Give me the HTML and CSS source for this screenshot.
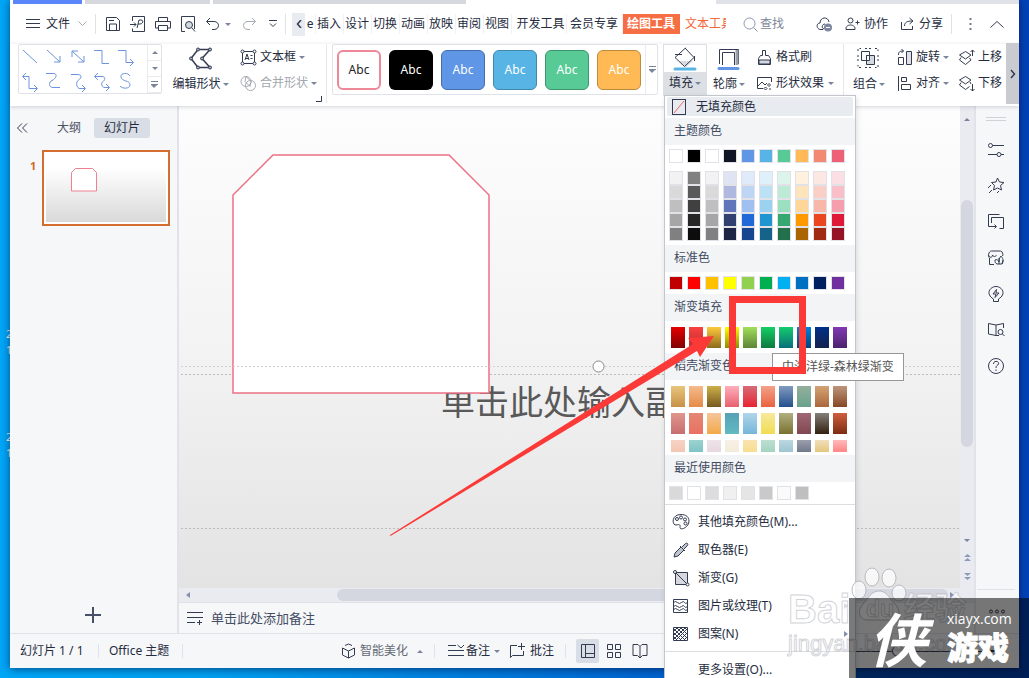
FILE: index.html
```html
<!DOCTYPE html>
<html lang="zh-CN">
<head>
<meta charset="utf-8">
<title>演示文稿</title>
<link rel="stylesheet" href="styles.css">
</head>
<body>
<span class="desk-label desk-label-a">2<br>1</span>
<span class="desk-label desk-label-b">2<br>1</span>
<div class="window">
  <div class="doc-tabs"><i class="doc-tab active"></i><i class="doc-tab short"></i><i class="doc-tab long"></i><i class="doc-rest"></i></div>

  <header class="menubar">
    <button class="file-btn"><svg class="ico" width="14" height="10"><path d="M0 .5h14M0 4.5h14M0 8.5h14"/></svg>文件<svg class="ico faint" width="9" height="6"><path d="M.5 .5l4 4 4-4"/></svg></button>
    <i class="vsep"></i>
    <div class="quick">
      <button aria-label="保存"><svg class="ico" width="16" height="16"><path d="M1.5 1.5h10l3 3v10h-13zM4.500 14v-6h7v6M4 4.500h5"/></svg></button>
      <button aria-label="输出为PDF"><svg class="ico" width="16" height="16"><path d="M2.500 5V.5h12v15h-12v-3M0 8.500h6M4 6.500l2 2-2 2M7 12l2-8h2c3 0 2 4-1 4H8"/></svg></button>
      <button aria-label="打印"><svg class="ico" width="16" height="16"><path d="M3.500 5V1.500h9V5M3.500 12h-3V5.500h15V12h-3M3.500 9.500h9v5h-9z"/></svg></button>
      <button aria-label="打印预览"><svg class="ico" width="16" height="16"><path d="M5 15.500H1.500V.5h13V13M12 12l3 3.500"/><circle cx="9" cy="9" r="3.500" fill="#d4d8df"/></svg></button>
      <button aria-label="撤销"><svg class="ico" width="15" height="16"><path d="M5 2L1.500 5.500 5 9M2 5.500h7c6 0 6 8 0 8H7"/></svg></button>
      <i class="tri"></i>
      <button aria-label="恢复" class="redo"><svg class="ico faint" width="15" height="16"><path d="M10 2l3.500 3.500L10 9M13 5.500H6c-6 0-6 8 0 8h2"/></svg></button>
      <button aria-label="自定义"><svg class="ico" width="8" height="8"><path d="M0 .5h8M1 3.500l3 3 3-3"/></svg></button>
    </div>
    <i class="vsep"></i>
    <button class="tab-left" aria-label="向左"><svg class="ico" width="6" height="8"><path d="M5 0L1.500 4 5 8" stroke-width="1.500"/></svg></button>
    <nav class="tabs">
      <button class="cut">e</button><button>插入</button><button>设计</button><button>切换</button><button>动画</button><button>放映</button><button>审阅</button><button>视图</button><button class="wide">开发工具</button><button class="wide2">会员专享</button><button class="current">绘图工具</button><button class="orange">文本工具</button>
    </nav>
    <label class="search"><svg class="ico" width="15" height="15"><circle cx="6.500" cy="6.500" r="5.500"/><path d="M10.500 10.500l4 4"/></svg><input type="text" placeholder="查找" aria-label="查找"></label>
    <div class="account">
      <button aria-label="云同步"><svg class="ico" width="17" height="15"><path d="M7 12.500H5C0 12.500 0 6 4 6 4 0 12-1 13 5M8 12c-3-1-2-5 1-5"/><circle cx="12" cy="10.500" r="4" fill="#7d87a0" stroke="none"/><path d="M10 10.500h4" stroke="#fff"/></svg></button>
      <button class="collab"><svg class="ico" width="15" height="14"><circle cx="5.500" cy="3.500" r="2.500"/><path d="M1 12.500c-1-6 10-6 9 0zM10.500 5.500h4M12.500 3.500v4"/></svg>协作</button>
      <button class="share"><svg class="ico" width="15" height="14"><path d="M1.500 5v7.500h11V9M4.500 9c0-4 3-5 8-5M9.500 1l3.500 3-3.500 3"/></svg>分享</button>
    </div>
    <i class="vsep"></i>
    <button class="dots" aria-label="更多"><svg width="3" height="13" fill="#737a8b"><path d="M.5 0h2v2h-2zM.5 5h2v2h-2zM.5 10h2v2h-2z"/></svg></button>
    <button class="fold" aria-label="折叠功能区"><svg class="ico" width="14" height="8"><path d="M.5 7.500l6.500-6 6.500 6"/></svg></button>
  </header>

  <section class="ribbon">
    <div class="line-gallery">
      <svg class="ico blue" width="125" height="48"><path d="M4 5l14 13M28 5l13 12M41 11v6h-6M53 6l12 11M53 12V6h6M65 11v6h-6M75 5.500h8v13h7M99 5.500h8v12h7M111 14l3.500 3.500-3.500 3.500M4 31.500h6v12h8M7 28l-3.500 3.500L7 35M15 40l3.500 3.500L15 47M27 28.500h7c6 0 2 6-1 7s-4 7 1 7h7M52 29.500h6c7 0 3 5 1 6s-2 8 2 8h5M63 40l3.500 3.500L63 47M76 31.500h7c4 0 3 4 1 5s-2 6 2 6h4M79 28l-3.500 3.500L79 35M87 39l3.500 3.500L87 46M111 31c-2-4-10-3-9 1 1 5 9 3 9 8 0 4-8 4-10 1"/></svg>
      <div class="stepper"><button aria-label="上一行"><i class="tri up"></i></button><button aria-label="下一行"><i class="tri"></i></button><button aria-label="展开"><i class="tri bar"></i></button></div>
    </div>
    <button class="big edit"><svg class="ico" width="26" height="24"><path d="M10 2.500h12l-8 9 8 9H10L3 11.500z" stroke-width="1.500"/><g fill="#aab0bd"><circle cx="10" cy="2.500" r="1.500"/><circle cx="22" cy="2.500" r="1.500"/><circle cx="14" cy="11.500" r="1.500"/><circle cx="22" cy="20.500" r="1.500"/><circle cx="10" cy="20.500" r="1.500"/><circle cx="3" cy="11.500" r="1.500"/></g></svg><span>编辑形状<i class="tri"></i></span></button>
    <div class="pair textpair">
      <button><svg class="ico" width="17" height="17"><path d="M2.500 2.500h12v12h-12zM5 11l2-6 2 6M5.500 9.500h3M10.500 6.500h2M10.500 9.500h2"/><g fill="#fff"><circle cx="2.500" cy="2.500" r="1.500"/><circle cx="14.500" cy="2.500" r="1.500"/><circle cx="2.500" cy="14.500" r="1.500"/><circle cx="14.500" cy="14.500" r="1.500"/></g></svg>文本框<i class="tri"></i></button>
      <button class="off"><svg class="ico faint" width="17" height="17"><circle cx="6" cy="6.500" r="5"/><circle cx="10.500" cy="10.500" r="5"/><path d="M6 1.500l5 5-1 5-5-5z"/></svg>合并形状<i class="tri"></i></button>
      <svg class="ico launcher" width="6" height="6"><path d="M5.500 0v5.500H0"/></svg>
    </div>
    <i class="rsep"></i>
    <div class="style-gallery">
      <button class="chip c1">Abc</button><button class="chip c2">Abc</button><button class="chip c3">Abc</button><button class="chip c4">Abc</button><button class="chip c5">Abc</button><button class="chip c6">Abc</button>
      <button class="more" aria-label="更多样式"><i class="tri bar"></i></button>
    </div>
    <div class="fill-wrap">
      <button class="fill-btn"><span class="fill-ico"><svg class="ico" width="24" height="24"><path d="M6 14h14l-7 6z" fill="#d9dade" stroke="none"/><path d="M12.500 1L2 10.500l9.500 9 9.500-9-9-9.500M2 7.500h7M21.500 9v5"/><path d="M2 22h20" stroke="#58b4e4" stroke-width="3" stroke-linecap="round"/></svg></span><span>填充<i class="tri"></i></span></button>
      <div class="fill-menu" id="fill-menu">
        <button class="no-fill"><svg class="ico" width="14" height="16"><rect x=".5" y=".5" width="13" height="15" fill="#e9ebef"/><path d="M2 14L12 2" stroke="#e66a6a"/></svg>无填充颜色</button>
        <h3>主题颜色</h3>
        <div class="swatches" data-set="theme"></div>
        <div class="swatches tints" data-set="tints"></div>
        <h3>标准色</h3>
        <div class="swatches" data-set="standard"></div>
        <h3>渐变填充</h3>
        <div class="swatches grad one" data-set="gradient"></div>
        <h3>稻壳渐变色</h3>
        <div class="swatches grad many" data-set="docer"></div>
        <h3>最近使用颜色</h3>
        <div class="swatches recent" data-set="recent"></div>
        <hr>
        <button class="item"><svg class="ico" width="18" height="18"><path d="M9 1.500C-1 1.500 0 12.500 4 12c4-1 4.500 0 4 2.500 0 3.500 9 0 9-6.500 0-4-3-6.500-8-6.500z"/><circle cx="5" cy="6" r="1.500"/><circle cx="9" cy="4.500" r="1.500"/><circle cx="13" cy="6.500" r="1.500"/><circle cx="13.500" cy="10.500" r="1.500"/></svg>其他填充颜色(M)...</button>
        <button class="item"><svg class="ico" width="18" height="18"><path d="M2 16l1-4 6-6 3 3-6 6zM8 5l5 5M10 6l3-3c2-2 4 0 2 2l-3 3" fill="#bfc3cc"/></svg>取色器(E)</button>
        <button class="item"><svg class="ico" width="18" height="18"><path d="M3.500 3.500h12v12h-12z" fill="#d6d8dd"/><path d="M3 3l13 13"/><circle cx="3" cy="3" r="1.500" fill="#fff"/><circle cx="15.500" cy="15.500" r="1.500" fill="#fff"/></svg>渐变(G)</button>
        <button class="item"><svg class="ico" width="18" height="18"><path d="M1.500 2.500h14v13h-14zM1.500 5.500q2-2 4 0t4 0 3 0 3 0M1.500 9.500q2-2 4 0t4 0 3 0 3 0M1.500 12.500q2-2 4 0t4 0 3 0 3 0"/></svg>图片或纹理(T)<i class="tri right"></i></button>
        <button class="item"><svg class="ico" width="18" height="18"><path d="M1.500 2.500h14v13h-14zM2 6l4-4M2 10l8-8M2 14l12-12M4 15L15 4M8 15l7-7M12 15l3-3M2 12l3 3M2 8l7 7M2 4l11 11M4 2l11 11M8 2l7 7M12 2l3 3"/></svg>图案(N)<i class="tri right"></i></button>
        <hr>
        <button class="item last">更多设置(O)...</button>
      </div>
    </div>
    <button class="big outline"><svg class="ico" width="24" height="24"><path d="M2.500 17V2.500h19V17" /><path d="M20 3v15" stroke="#9ba0ab" stroke-width="3"/><path d="M5.500 18V5.500h12V18"/><path d="M2 21.500h19" stroke="#6295e6" stroke-width="3" stroke-linecap="round"/></svg><span>轮廓<i class="tri"></i></span></button>
    <div class="pair fxpair">
      <button><svg class="ico" width="15" height="17"><path d="M5.500 6.500v-5h3v5h3l2 3v6h-12v-6l2-3z"/><path d="M2 11h11v4H2z" fill="#d5d8de"/></svg>格式刷</button>
      <button><svg class="ico" width="15" height="15"><path d="M6 12.500H.5v-11h14V6M1 10l4-4 3 3 2-2M12 7.500l1.500 1.500-1.500 1.500-1.500-1.500zM8.500 11l1.500 1.500-1.500 1.500L7 12.500zM13 12v2"/></svg>形状效果<i class="tri"></i></button>
    </div>
    <i class="rsep"></i>
    <button class="big group"><svg class="ico" width="22" height="22"><path d="M4.500 4.500h8v9h-8z" /><path d="M9.500 8.500h8v9h-8z" fill="#d5d8de"/><path d="M9.500 8.500h3v5h-3z" fill="#fff"/><path d="M1 4V1.500h3M8 1.500h6M18 1.500h3V4M21 8v6M21 18v2.500h-3M14 20.500H8M4 20.500H1V18M1 14V8" stroke-dasharray="2 2"/></svg><span>组合<i class="tri"></i></span></button>
    <div class="pair arrange">
      <button><svg class="ico" width="16" height="17"><path d="M9.500 2.500h5v13h-5z" fill="#dfe1e6"/><path d="M1.500 8.500h5v7h-5zM1.500 6c0-3 1-4 5-4M4.500 0l2 2-2 2"/></svg>旋转<i class="tri"></i></button>
      <button><svg class="ico" width="16" height="17"><path d="M1.500 1v15M4.500 2.500h5v4h-5zM4.500 9.500h9v5h-9z"/></svg>对齐<i class="tri"></i></button>
    </div>
    <div class="pair order">
      <button><svg class="ico" width="18" height="17"><path d="M1.500 6l6-3.500 5.500 3.500-5.500 4zM3 8.500l-1.500 2.500 6 4.500 5.500-4.500-1.500-2"/><path d="M14.500 7V1M12.500 3l2-2 2 2"/></svg>上移</button>
      <button><svg class="ico" width="18" height="17"><path d="M1.500 5l6-3.500 5.500 3.500-5.500 4zM3 7.500l-1.500 2.500 6 4.500 4-3M12 7l1 2"/><path d="M14.500 9v7M12.500 14l2 2 2-2"/></svg>下移</button>
    </div>
    <button class="ribbon-next" aria-label="向右"><svg class="ico" width="6" height="10"><path d="M1 1l3.500 4L1 9" stroke-width="1.500"/></svg></button>
  </section>

  <main class="work">
    <aside class="slides">
      <div class="pane-tabs"><button class="collapse" aria-label="收起"><svg class="ico" width="11" height="10"><path d="M5 .5L.5 5 5 9.500M10 .5L5.500 5l4.500 4.500"/></svg></button><button>大纲</button><button class="on">幻灯片</button></div>
      <div class="slide-row"><span class="num">1</span><button class="thumb" aria-label="幻灯片 1"><svg width="120" height="68"><path d="M25.500 37V18.500l4-4h17l4 4V37z" fill="#fff" stroke="#ee8090"/></svg></button></div>
      <button class="add" aria-label="新建幻灯片"><svg class="ico" width="16" height="16"><path d="M8 0v16M0 8h16" stroke-width="2"/></svg></button>
    </aside>
    <section class="editor">
      <div class="stage">
        <p class="placeholder">单击此处输入副</p>
        <svg class="drawing" width="100%" height="100%">
          <path d="M54 287V89l40-40h176l40 40v198z" fill="#fff" stroke="#ec7185" stroke-width="1.500"/>
          <g stroke="#bcbcbc" stroke-dasharray="2 2"><path d="M2 260.500h1500" stroke="#d0d0d0"/><path d="M2 268.500h52M311 268.500h1500M2 422.500h1500"/></g>
          <circle cx="419.500" cy="260.500" r="5.500" fill="#fff" stroke="#888"/>
        </svg>
      </div>
      <div class="vscroll"><i class="tri up"></i><i class="vthumb"></i><i class="tri"></i><svg width="7" height="30" fill="#8e9ab9"><path d="M3.500 3L7 6H0zM3.500 7L7 10H0zM0 22h7l-3.500 3zM0 26h7l-3.500 3z"/></svg></div>
      <div class="hscroll"><i class="tri left"></i><i class="hthumb"></i><i class="tri right"></i></div>
      <div class="notes"><svg class="ico" width="17" height="15"><path d="M0 1.500h16M0 6.500h16M0 11.500h8M10 11.500h5M12.500 9v5"/></svg>单击此处添加备注</div>
    </section>
    <aside class="tools">
      <i class="grip"></i>
      <button aria-label="属性"><svg class="ico" width="18" height="18"><circle cx="3.500" cy="4.500" r="2"/><path d="M5.500 4.500H17M1 13.500h9M14 13.500h3"/><circle cx="12" cy="13.500" r="2"/></svg></button>
      <button aria-label="动画"><svg class="ico" width="18" height="18"><path d="M10.500 1l2 4 4.500.500-3.500 3 1 4.500-4-2-4 2 1-4.500-3-3 4.500-.500zM4 8l-3 3M5 13l-3 3M12 14l-2 2"/></svg></button>
      <button aria-label="切换"><svg class="ico" width="18" height="18"><path d="M6 13.500H1.500v-12h11M4.500 10V4.500h12v11h-4M6 13.500h3M7.500 11.500l2 2-2 2"/></svg></button>
      <button aria-label="素材"><svg class="ico" width="18" height="18"><path d="M7 15.500H2.500V9c-2-1-1-7 2-7h9c2 0 3 4 2 5M1.500 6c1 3 4 3 4 0 1 2 3 2 4 0M8 11c2-1 3 0 4 2 0-3 1-5 2-6 2 2 3 5 1 8h-5c-2-1-2-2-2-4zM12 15V9M15 15l1-4"/></svg></button>
      <button aria-label="灵感"><svg class="ico" width="18" height="18"><path d="M6.500 14C-2 9 3 1.500 9 1.500S20 9 11.500 14v2.500h-5zM9.500 4.500L6 9h3l-1 3.500L12 8H9z"/></svg></button>
      <button aria-label="查阅"><svg class="ico" width="18" height="18"><path d="M9 14.500L1.500 13V2.500L9 4l7.500-1.500V7M9 4v10.500h3"/><circle cx="13.500" cy="11" r="2.500"/><path d="M15.500 13l2 2"/></svg></button>
      <button aria-label="帮助"><svg class="ico" width="18" height="18"><circle cx="9" cy="9" r="7.500"/><path d="M6.500 7c0-4 6-3 5 0-1 2-2.500 1-2.500 4M9 12.500V14"/></svg></button>
      <i class="tool-rule"></i>
      <button class="tool-more" aria-label="更多工具"><svg class="ico" width="17" height="5"><circle cx="3" cy="2.500" r="1.500"/><circle cx="9" cy="2.500" r="1.500"/><circle cx="15" cy="2.500" r="1.500"/></svg></button>
    </aside>
  </main>

  <footer class="status">
    <div class="status-left"><span class="page">幻灯片 1 / 1</span><i class="vsep"></i><span class="office">Office 主题</span><i class="vsep"></i></div>
    <button class="beauty"><svg class="ico" width="15" height="16"><path d="M4 2.500L7.500 1 11 2.500M1.500 5v7l6 3 6-3V5l-6 3zM7.500 8v7"/></svg>智能美化<i class="tri up"></i></button>
    <i class="vsep"></i>
    <button class="note-btn"><svg class="ico" width="17" height="14"><path d="M0 1.500h8M0 6.500h16M0 11.500h16M9.500 1l3.500 3 3-3"/></svg>备注<i class="tri"></i></button>
    <button class="comment"><svg class="ico" width="17" height="16"><path d="M8 2.500H1.500v12l2-2h11V8M12.500 0v7M9 3.500h7"/></svg>批注</button>
    <i class="vsep"></i>
    <div class="views">
      <button class="on" aria-label="普通视图"><svg class="ico" width="16" height="16"><path d="M1.500 1.500h13v13h-13zM5.500 1.500v13M5.500 10.500h9"/></svg></button>
      <button aria-label="浏览视图"><svg class="ico" width="16" height="16"><path d="M1.500 1.500h5v5h-5zM9.500 1.500h5v5h-5zM1.500 9.500h5v5h-5zM9.500 9.500h5v5h-5z"/></svg></button>
      <button aria-label="阅读视图"><svg class="ico" width="16" height="16"><path d="M8 3.500L6 1.500H1v11h4.500L8 15l2.500-2.500H15v-11h-5zM8 3.500V14"/></svg></button>
    </div>
    <label class="zoom"><input type="range" min="10" max="200" value="92" aria-label="缩放"></label>
    <button class="zoom-in" aria-label="放大"><svg class="ico" width="12" height="12"><path d="M6 0v12M0 6h12" stroke-width="2"/></svg></button>
  </footer>
</div>

<div class="tooltip" role="tooltip">中海洋绿-森林绿渐变</div>
<svg class="marks" width="1029" height="678"><path d="M390 535L693 344 688 338 714 336 700 357 697 351 390.500 536z" fill="#fb3937"/><path d="M732.500 299.500h70v71h-70z" fill="none" stroke="#fb3937" stroke-width="7"/></svg>
<div class="baidu">
  <svg class="paw" width="56" height="54" fill="#fff" stroke="#b9bac0" fill-opacity=".7"><ellipse cx="8" cy="23" rx="7" ry="9"/><ellipse cx="21" cy="10" rx="7" ry="9"/><ellipse cx="38" cy="11" rx="7" ry="9"/><ellipse cx="48" cy="26" rx="7" ry="8"/><path d="M28 24c-8 0-10 7-16 13-7 8-3 16 4 16h24c8 0 11-8 4-16-6-6-8-13-16-13z"/></svg>
  <div class="baidu-name"><b>Bai</b><em>du</em><strong>经验</strong></div><span>jingyan.baidu.com</span>
</div>
<div class="site-mark"><span class="xia">侠</span><div class="site-name"><small>xiayx.com</small><b>游戏</b></div></div>
<script src="script.js"></script>
</body>
</html>
```
FILE: styles.css
```css
* { box-sizing: border-box; }
html, body { height: 100%; }
body {
  margin: 0; padding: 0 10px 10px; overflow: hidden; position: relative;
  font: 12px/16px "Noto Sans", "Noto Sans CJK SC", sans-serif; color: #252c40;
  background: linear-gradient(90deg, #00a6f7 0, #00a0f0 20%, #0062cd 65%, #0242b8 100%);
}
button, input { font: inherit; color: inherit; border: 0; background: none; padding: 0; margin: 0; }
button { display: flex; align-items: center; white-space: nowrap; flex: none; }
svg { flex: none; display: block; }
i { display: block; flex: none; }
.ico { fill: none; stroke: #333b50; stroke-width: 1; }
.ico.faint { stroke: #a5a9b1; }
.ico.blue { stroke: #6c93dd; }
.tri { width: 0; height: 0; border: 3px solid transparent; border-top-color: #7a849d; border-bottom: 0; }
.tri.up { border-bottom: 3px solid #7a849d; border-top: 0; }
.tri.left { border: 3px solid transparent; border-right: 4px solid #8490ac; border-left: 0; }
.tri.right { border: 3px solid transparent; border-left: 4px solid #8490ac; border-right: 0; }
.tri.bar { width: 7px; height: 8px; border: 0; background: linear-gradient(#7a849d, #7a849d) 0 0 / 7px 1px no-repeat, linear-gradient(#7a849d, #7a849d) 0 3px / 7px 1px no-repeat; position: relative; }
.tri.bar::after { content: ""; position: absolute; left: 0; top: 4px; border: 3px solid transparent; border-top-color: #7a849d; border-bottom: 0; }
.vsep { width: 1px; height: 20px; background: #e0e2e8; }
.desk-label { position: absolute; left: 6px; color: #fff; font-size: 11px; }
.desk-label-a { top: 326px; }
.desk-label-b { top: 429px; }

.window { position: relative; height: 100%; display: flex; flex-direction: column; background: #fff; box-shadow: 0 1px 8px rgba(0, 10, 50, .6); }

.doc-tabs { height: 4px; display: flex; gap: 3px; padding-left: 3px; flex: none; }
.doc-tab { background: #d6d8de; }
.doc-tab.active { width: 69px; background: #5b86fb; }
.doc-tab.short { width: 125px; }
.doc-tab.long { width: 253px; margin-right: 247px; }
.doc-rest { flex: 1; background: #e0e2e7; }

.menubar { height: 40px; display: flex; align-items: center; padding-left: 16px; flex: none; }
.file-btn { gap: 6px; margin-right: 8px; }
.file-btn svg:last-child { margin-left: 2px; }
.quick { display: flex; align-items: center; gap: 9px; width: 189px; padding-left: 9px; }
.quick .tri { margin-left: -4px; }
.quick .redo { margin: 0 3px 0 2px; }
.tab-left { width: 13px; height: 23px; margin-left: 6px; background: #e8ebf0; justify-content: center; }
.tabs { display: flex; align-items: center; width: 421px; overflow: hidden; flex: none; }
.tabs button { width: 28px; justify-content: center; height: 20px; box-shadow: inset 1px 0 #f0f1f4; }
.tabs .cut { width: 10px; box-shadow: none; }
.tabs .wide { width: 55px; padding-left: 4px; }
.tabs .wide2 { width: 56px; }
.tabs .current { width: 58px; background: #f66e43; color: #fff; font-weight: 700; }
.tabs .orange { width: 47px; padding-left: 5px; justify-content: flex-start; color: #f0683c; overflow: hidden; box-shadow: none; }
.search { display: flex; align-items: center; gap: 2px; margin-left: 17px; color: #8790a2; }
.search .ico { stroke: #8a94aa; }
.search input { width: 46px; outline: 0; }
.search input::placeholder { color: #7d8698; opacity: 1; }
.account { display: flex; gap: 12px; margin-left: 10px; margin-right: 8px; }
.account button { gap: 4px; }
.dots { margin-left: 17px; }
.fold { margin-left: 18px; }

.ribbon { height: 62px; flex: none; display: flex; align-items: flex-start; padding-left: 8px; position: relative; z-index: 2; box-shadow: 0 1px 4px rgba(60, 70, 90, .22); background: #fff; }
.line-gallery { width: 144px; height: 50px; display: flex; border: 1px solid #e0e2e7; border-radius: 2px; flex: none; }
.line-gallery > svg { width: 128px; }
.stepper { width: 14px; border-left: 1px solid #e9ebef; display: flex; flex-direction: column; }
.stepper button { height: 16px; justify-content: center; border-bottom: 1px solid #e9ebef; }
.big { flex-direction: column; gap: 5px; padding-top: 3px; }
.big span { display: flex; align-items: center; gap: 2px; }
.edit { margin-left: 10px; width: 57px; }
.outline { margin-left: 6px; }
.outline svg, .group svg { align-self: flex-start; margin-left: 4px; }
.group { gap: 7px; }
.pair { display: flex; flex-direction: column; gap: 2px; padding-top: 1px; flex: none; }
.pair button { height: 24px; gap: 3px; }
.textpair { width: 82px; margin-left: 11px; position: relative; }
.textpair .off { color: #a3a7ae; }
.launcher { position: absolute; right: 0; top: 52px; }
.rsep { width: 1px; height: 59px; background: #e6e8ec; margin-left: 4px; }
.style-gallery { display: flex; gap: 8px; width: 326px; height: 51px; border: 1px solid #e0e2e7; border-radius: 2px; padding: 5px 0 0 4px; margin-left: 5px; flex: none; }
.chip { width: 44px; height: 40px; border-radius: 6px; border: 1px solid #0003; color: #fff; justify-content: center; }
.c1 { border: 2px solid #ee8798; color: #222; }
.c2 { background: #000; }
.c3 { background: #6096e6; border-color: #456fab; }
.c4 { background: #58b4e4; border-color: #4188ad; }
.c5 { background: #57ca95; border-color: #3f956d; }
.c6 { background: #ffba55; border-color: #c08a3d; }
.more { height: 49px; margin: -5px 0 0 -4px; width: 13px; justify-content: center; border-left: 1px solid #e9ebef; }

.fill-wrap { position: relative; margin-left: 5px; flex: none; }
.fill-btn { width: 44px; height: 52px; flex-direction: column; background: #dce0e5; border: 1px solid #dce0e5; gap: 3px; }
.fill-btn > span { display: flex; align-items: center; gap: 2px; }
.fill-btn .fill-ico { width: 42px; height: 27px; background: #fff; justify-content: center; }
.fill-menu { position: absolute; top: 51px; left: 1px; width: 192px; padding: 1px 0; background: #fff; border: 1px solid #c3c6cc; box-shadow: 1px 2px 5px rgba(40, 50, 70, .15); }
.no-fill { width: 186px; height: 19px; margin: 0 0 2px 2px; padding-left: 5px; gap: 10px; background: #e8ebf0; border-radius: 2px; }
.fill-menu h3 { margin: 0; height: 27px; padding: 5px 0 0 9px; font: inherit; line-height: 16px; color: #414b62; background: #f3f4f6; }
.swatches { display: grid; grid-template-columns: repeat(10, 14px); gap: 4px; padding: 4px 0 4px 4px; }
.swatches button { height: 14px; width: 14px; border: 1px solid #e0e2e7; display: block; }
.tints { row-gap: 0; }
.grad { padding: 6px 0 5px 6px; row-gap: 6px; }
.grad button { height: 21px; border: 0; }
.many { height: 75px; padding-bottom: 0; overflow: hidden; clip-path: inset(0 0 3px 0); }
.fill-menu hr { border: 0; border-top: 1px solid #dcdee2; margin: 0 0 3px; }
.item { width: 100%; height: 28px; padding-left: 7px; gap: 8px; }
.item .right { margin-left: auto; margin-right: 7px; }
.item.last { padding-left: 33px; }
.fill-menu .item + hr { margin: 3px 0 4px; }

.fxpair { margin-left: 12px; width: 77px; }
.fxpair button { gap: 4px; }
.fxpair + .rsep { margin-left: 9px; }
.group { margin-left: 9px; }
.arrange { margin-left: 12px; }
.order { margin-left: 9px; }
.order button { gap: 2px; }
.ribbon-next { width: 13px; height: 61px; margin: -1px 0 0 auto; background: #c9cbd1; justify-content: center; }

.work { flex: 1; min-height: 0; display: grid; grid-template: minmax(0, 1fr) / 169px 1fr 45px; background: #f6f7f9; }
.slides { border-right: 2px solid #e1e3e9; display: flex; flex-direction: column; padding: 12px 7px 0 6px; }
.pane-tabs { display: flex; align-items: center; color: #4a5265; }
.pane-tabs button { height: 20px; }
.pane-tabs .collapse { margin: 0 29px 0 1px; }
.pane-tabs .on { margin-left: 13px; padding: 0 10px; background: #d9dde5; border-radius: 3px; color: #252c40; }
.slide-row { display: flex; margin-top: 12px; }
.num { width: 27px; padding: 8px 0 0 14px; color: #d2691e; font-size: 11px; font-weight: 700; }
.thumb { width: 128px; height: 76px; border: 2px solid #d36d30; padding: 2px; background: #fff; }
.thumb svg { background: linear-gradient(#fff 20%, #d9d9d9); }
.add { margin: auto auto 10px; }
.add .ico { stroke: #465069; }
.editor { display: grid; grid-template: minmax(0, 1fr) 15px 30px / 1fr 14px; min-width: 0; }
.stage { position: relative; overflow: hidden; background: linear-gradient(#fdfdfd, #f3f3f3 50%, #e3e3e3); }
.placeholder { position: absolute; left: 262px; top: 272px; margin: 0; font-size: 34px; line-height: 48px; color: #595959; white-space: nowrap; }
.drawing { position: absolute; inset: 0; }
.vscroll { background: #e9ebf0; display: flex; flex-direction: column; align-items: center; padding-top: 12px; min-height: 0; }
.vthumb { width: 12px; flex: 1 0 0; margin-top: 79px; margin-bottom: 92px; border-radius: 6px; background: #d4d7df; }
.vscroll svg { margin: 9px 0 7px; }
.hscroll { grid-column: 1 / 3; background: #e9ebf0; border-bottom: 1px solid #dfe1e7; display: flex; align-items: center; padding: 0 20px 0 7px; }
.hthumb { height: 12px; flex: 1; margin: 0 2px 0 147px; border-radius: 6px; background: #d4d7df; }
.notes { grid-column: 1 / 3; display: flex; align-items: center; gap: 7px; padding-left: 8px; color: #444d63; font-size: 13px; }
.tools { border-left: 2px solid #e1e3e9; display: flex; flex-direction: column; align-items: center; padding: 11px 3px 0 0; min-height: 0; }
.grip { width: 20px; height: 4px; border: solid #cfd2d7; border-width: 1px 0; margin-bottom: 11px; }
.tools button { height: 36px; }
.tool-rule { height: 1px; width: 38px; background: #e1e3e9; margin-top: auto; }
.tools .tool-more { height: 43px; }

.status { height: 35px; flex: none; border-top: 1px solid #e0e2e8; background: #f6f7f9; display: flex; align-items: center; }
.status .vsep { height: 14px; }
.status button { gap: 4px; }
.status-left { width: 33%; display: flex; align-items: center; gap: 10px; padding-left: 10px; flex: none; }
.page { width: 68px; }
.office { width: 63px; white-space: nowrap; }
.status .beauty { color: #626773; margin-left: -2px; }
.beauty .tri { margin: 0 11px 0 5px; }
.note-btn { margin-left: 13px; }
.status .note-btn { gap: 1px; }
.note-btn .tri { margin: 0 9px 0 3px; }
.comment { margin-right: 11px; }
.views { display: flex; gap: 3px; margin-left: 10px; }
.views button { width: 23px; height: 24px; justify-content: center; }
.views .on { background: #d9dde5; border-radius: 2px; }
.zoom { margin-left: auto; display: flex; }
.zoom input { appearance: none; width: 150px; height: 12px; background: linear-gradient(#333b50, #333b50) 0 6px / 100% 1px no-repeat; }
.zoom input::-webkit-slider-thumb { appearance: none; width: 12px; height: 12px; border: 1px solid #333b50; border-radius: 50%; background: #fff; }
.zoom-in { margin: 0 17px 0 8px; }

.tooltip { position: absolute; z-index: 4; left: 772px; top: 353px; padding: 5px 9px; background: #fff; border: 1px solid #979797; color: #555; white-space: nowrap; }
.marks { position: absolute; z-index: 5; left: 0; top: 0; pointer-events: none; }
.baidu { position: absolute; z-index: 6; left: 788px; top: 588px; color: #ffffffb0; pointer-events: none; white-space: nowrap; -webkit-text-stroke: 1px #b4b6bd99; font-family: "Liberation Sans", "Noto Sans CJK SC", sans-serif; }
.baidu-name { display: flex; align-items: center; height: 42px; }
.baidu-name b { width: 78px; font-size: 40px; line-height: 42px; }
.baidu-name em { position: relative; width: 38px; font-style: normal; font-weight: 700; font-size: 23px; line-height: 24px; }
.baidu-name strong { font-size: 31px; line-height: 42px; }
.baidu > span { display: block; margin-top: 2px; font-size: 22px; line-height: 24px; }
.paw { position: absolute; left: 63px; top: -21px; }
.site-mark { position: absolute; z-index: 7; right: 0; bottom: 0; width: 180px; height: 80px; display: flex; align-items: center; padding-left: 20px; background: rgba(0, 0, 0, .52); color: #fff; font-family: "Open Sans", "Noto Sans CJK SC", sans-serif; }
.xia { width: 78px; font-size: 58px; line-height: 60px; padding-top: 4px; font-weight: 700; font-style: italic; }
.site-name small { display: block; font-size: 14px; line-height: 18px; }
.site-name b { display: block; font-size: 31px; line-height: 38px; font-weight: 900; -webkit-text-stroke: 1px #fff; }
```
FILE: script.js
```js
const palettes = {
  theme: ['#fff', '#000', '#fff', '#101624', '#6096e6', '#58b4e4', '#57ca95', '#ffba55', '#f28970', '#ee5f78'],
  tints: [
    '#f2f2f2', '#808080', '#f2f2f2', '#dfe3f2', '#dfeafa', '#def0fa', '#ddf4ea', '#fff1dd', '#fce7e2', '#fcdfe4',
    '#d9d9d9', '#595959', '#d9d9d9', '#afb8de', '#bfd5f5', '#bce1f4', '#bcead5', '#ffe3bb', '#facfc5', '#f8bfc9',
    '#bfbfbf', '#404040', '#bfbfbf', '#6075ba', '#a0c0f0', '#9bd2ef', '#9adfbf', '#ffd699', '#f7b8a9', '#f59fae',
    '#a6a6a6', '#262626', '#a6a6a6', '#304070', '#2069d6', '#2095d0', '#35a872', '#ff9900', '#ea4620', '#df1a38',
    '#808080', '#0d0d0d', '#808080', '#1d2645', '#15468f', '#16638a', '#23704c', '#aa6500', '#a02b12', '#951227'],
  standard: ['#c00000', '#f00', '#ffc000', '#ff0', '#92d050', '#00b050', '#00b0f0', '#0070c0', '#002060', '#7030a0'],
  gradient: [['#e60000', '#800000'], ['#fb4040', '#b83030'], ['#ffc93c', '#8d6a1c'], ['#ff0', '#8c8c00'], ['#a0df59', '#5d8435'], ['#13cf65', '#0e783f'], ['#14cc6d', '#086e7b'], ['#0082dc', '#00437a'], ['#003088', '#14214f'], ['#8238b4', '#4c226c']],
  docer: [
    ['#e8c57c', '#c89048'], ['#f5ba8c', '#e58b48'], ['#cbb04a', '#77591e'], ['#ffaebb', '#e8606f'], ['#d76c78', '#e82432'], ['#f4a18a', '#e9633f'], ['#819bc0', '#23508d'], ['#93b09d', '#69a18c'], ['#d4a373', '#ab663b'], ['#bd967b', '#864725'],
    ['#df978d', '#c86d70'], ['#e28874', '#ea7060'], ['#f5c59a', '#f3a949'], ['#55a2b5', '#61bac1'], ['#b1d5eb', '#76b5d8'], ['#f6e99c', '#f1dd51'], ['#b0af81', '#7b7130'], ['#9d6972', '#824751'], ['#857f7a', '#33200f'], ['#d05e3e', '#7d2d12'],
    ['#f6d3c5', '#eebca4'], ['#9bd2d1', '#6bb9bb'], ['#eee3e9', '#e3ced7'], ['#f8f0e7', '#f0e7cf'], ['#f9e3b0', '#f5da79'], ['#bce0d3', '#90cbb2'], ['#b9d7e1', '#8bb6c8'], ['#9a9ead', '#535e70'], ['#f1dfbd', '#dbb44b'], ['#ffb8b8', '#ff6060']],
  recent: ['#d9d9d9', '#fff', '#dcdcdc', '#f0f0f0', '#e5e5e5', '#c9c9c9', '#fafafa', '#bfbfbf']
};

document.querySelectorAll('.swatches').forEach(box => {
  palettes[box.dataset.set].forEach(color => {
    const swatch = document.createElement('button');
    const stops = Array.isArray(color);
    swatch.setAttribute('aria-label', stops ? color.join(' – ') : color);
    swatch.style.background = stops ? `linear-gradient(${color[0]}, ${color[1]})` : color;
    box.append(swatch);
  });
});
```
